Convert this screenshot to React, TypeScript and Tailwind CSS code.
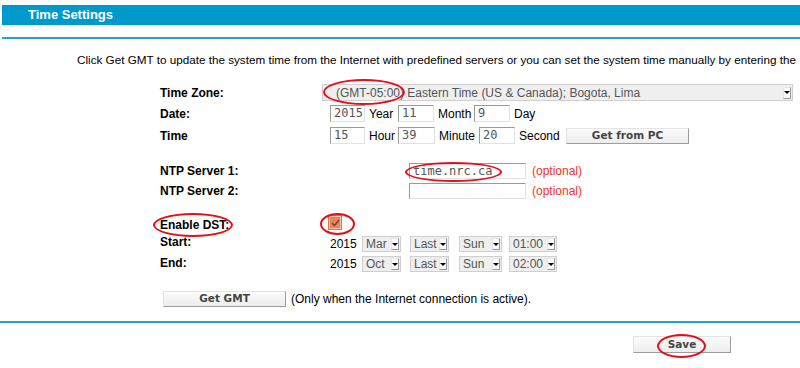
import React from 'react'

function TextBox({ w, value = '' }: { w: string; value?: string }) {
  return (
    <div
      className={`${w} h-full shrink-0 border border-t-[#9a9a9a] border-l-[#9a9a9a] border-b-[#e2e2e2] border-r-[#e2e2e2] bg-white pl-[3px] font-['DejaVu_Sans_Mono',monospace] text-[12px] leading-[14px] text-[#555]`}
    >
      {value}
    </div>
  )
}

function Dropdown({ w, value, className = '' }: { w: string; value: string; className?: string }) {
  return (
    <div
      className={`${w} ${className} flex h-full shrink-0 items-center border border-[#cfcfcf] bg-[#efefef] text-[12px] text-[#555]`}
    >
      <span className="flex-1 truncate pl-[3px] leading-[14px]">{value}</span>
      <span className="mr-[1px] flex h-[12px] w-[8px] items-center justify-center border border-[#e6e6e6] border-b-[#9a9a9a] border-r-[#9a9a9a] bg-[#fafafa]">
        <span className="h-0 w-0 border-x-[3px] border-t-[3px] border-x-transparent border-t-black" />
      </span>
    </div>
  )
}

function Btn({ w, h, label }: { w: string; h: string; label: string }) {
  return (
    <div
      className={`${w} ${h} flex shrink-0 items-center justify-center border border-[#e3e3e3] border-b-[#9c9c9c] border-r-[#9c9c9c] bg-gradient-to-b from-[#fbfbfb] to-[#ededed] font-['DejaVu_Sans',sans-serif] text-[10.5px] font-bold text-[#444]`}
    >
      {label}
    </div>
  )
}

function Mark({ cls }: { cls: string }) {
  return <div className={`pointer-events-none absolute rounded-[50%] border-2 border-[#e3101a] ${cls}`} />
}

export default function App() {
  return (
    <div className="relative h-[368px] w-[800px] overflow-hidden bg-white font-['Liberation_Sans',Arial,sans-serif] text-[12px] text-black">
      <div className="pl-[2px] pt-[5px]">
        <div className="h-[20px] bg-[#0099cc] pl-[26px] text-[13px] font-bold leading-[20px] text-white">
          Time Settings
        </div>
      </div>
      <div className="ml-[2px] mt-[12px] h-[2px] bg-[#2b9fd0]" />

      <p className="mt-[14px] whitespace-nowrap pl-[77px] text-[11.7px] leading-[14px]">
        Click Get GMT to update the system time from the Internet with predefined servers or you can set the system time manually by entering the
      </p>

      {/* time zone */}
      <div className="mt-[17px] flex h-[17px] items-center pl-[160px]">
        <span className="w-[162px] font-bold">Time Zone:</span>
        <Dropdown w="w-[471px]" value="(GMT-05:00) Eastern Time (US & Canada); Bogota, Lima" className="pl-[10px]" />
      </div>

      {/* date */}
      <div className="mt-[4px] flex h-[17px] items-center pl-[160px]">
        <span className="w-[170px] font-bold">Date:</span>
        <TextBox w="w-[35px]" value="2015" />
        <span className="ml-[4px] w-[29px]">Year</span>
        <TextBox w="w-[36px]" value="11" />
        <span className="ml-[4px] w-[36px]">Month</span>
        <TextBox w="w-[36px]" value="9" />
        <span className="ml-[4px]">Day</span>
      </div>

      {/* time */}
      <div className="mt-[5px] flex h-[17px] items-center pl-[160px]">
        <span className="w-[170px] font-bold">Time</span>
        <TextBox w="w-[35px]" value="15" />
        <span className="ml-[4px] w-[29px]">Hour</span>
        <TextBox w="w-[37px]" value="39" />
        <span className="ml-[4px] w-[40px]">Minute</span>
        <TextBox w="w-[36px]" value="20" />
        <span className="ml-[4px] w-[47px]">Second</span>
        <Btn w="w-[123px]" h="h-[16px]" label="Get from PC" />
      </div>

      {/* ntp */}
      <div className="mt-[19px] flex h-[16px] items-center pl-[160px]">
        <span className="w-[249px] font-bold">NTP Server 1:</span>
        <TextBox w="w-[117px]" value="time.nrc.ca" />
        <span className="ml-[6px] text-[#f2302c]">(optional)</span>
      </div>
      <div className="mt-[4px] flex h-[16px] items-center pl-[160px]">
        <span className="w-[249px] font-bold">NTP Server 2:</span>
        <TextBox w="w-[117px]" />
        <span className="ml-[6px] text-[#f2302c]">(optional)</span>
      </div>

      {/* dst */}
      <div className="mt-[17px] flex h-[16px] items-center pl-[160px]">
        <span className="mt-[1px] w-[169px] font-bold">Enable DST:</span>
        <div className="flex h-[13px] w-[12px] items-center justify-center self-start border border-[#f5c3aa] bg-[#e5855a] shadow-[0_0_0_1px_#d9764c]">
          <svg width="9" height="8" viewBox="0 0 9 8">
            <path d="M1 4 L3.5 6.5 L8 1" fill="none" stroke="#7a3c22" strokeWidth="1.3" />
          </svg>
        </div>
      </div>
      <div className="mt-[4px] flex h-[16px] items-center pl-[160px]">
        <span className="mb-[5px] w-[170px] font-bold">Start:</span>
        <span className="w-[32px]">2015</span>
        <Dropdown w="w-[39px]" value="Mar" />
        <Dropdown w="w-[39px]" value="Last" className="ml-[9px]" />
        <Dropdown w="w-[43px]" value="Sun" className="ml-[10px]" />
        <Dropdown w="w-[48px]" value="01:00" className="ml-[7px]" />
      </div>
      <div className="mt-[4px] flex h-[16px] items-center pl-[160px]">
        <span className="mb-[2px] w-[170px] font-bold">End:</span>
        <span className="w-[32px]">2015</span>
        <Dropdown w="w-[39px]" value="Oct" />
        <Dropdown w="w-[39px]" value="Last" className="ml-[9px]" />
        <Dropdown w="w-[43px]" value="Sun" className="ml-[10px]" />
        <Dropdown w="w-[48px]" value="02:00" className="ml-[7px]" />
      </div>

      {/* get gmt */}
      <div className="mt-[19px] flex h-[16px] items-center pl-[163px]">
        <Btn w="w-[123px]" h="h-[16px]" label="Get GMT" />
        <span className="ml-[5px]">(Only when the Internet connection is active).</span>
      </div>

      <div className="mt-[14px] h-[2px] bg-[#2b9fd0]" />

      <div className="mt-[13px] flex pl-[633px]">
        <Btn w="w-[98px]" h="h-[17px]" label="Save" />
      </div>

      {/* annotations */}
      <Mark cls="left-[323px] top-[79px] h-[26px] w-[82px]" />
      <Mark cls="left-[405px] top-[162px] h-[20px] w-[97px]" />
      <Mark cls="left-[153px] top-[213px] h-[24px] w-[80px]" />
      <Mark cls="left-[320px] top-[213px] h-[22px] w-[35px]" />
      <Mark cls="left-[657px] top-[334px] h-[24px] w-[49px]" />
    </div>
  )
}
